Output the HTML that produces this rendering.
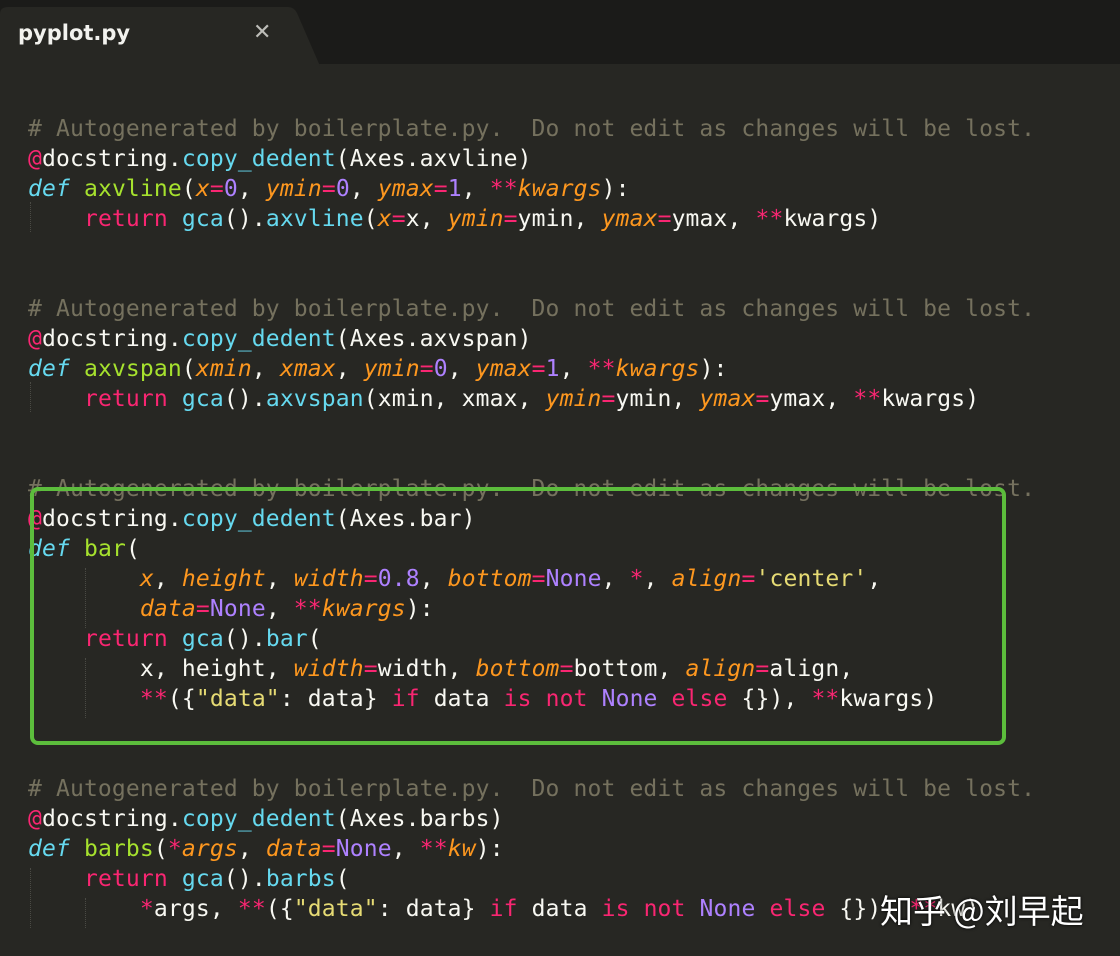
<!DOCTYPE html>
<html><head><meta charset="utf-8">
<style>
html,body{margin:0;padding:0}
body{width:1120px;height:956px;background:#272723;position:relative;overflow:hidden;font-family:"DejaVu Sans Mono","Liberation Mono",monospace}
.top{position:absolute;left:0;top:0;width:1120px;height:64px;background:#1b1b19}
.tab{position:absolute;left:0;top:0}
.tabt{position:absolute;left:18px;top:21px;font-family:"DejaVu Sans","Liberation Sans",sans-serif;font-size:21px;color:#f2f2ee;font-weight:bold}
.x{position:absolute;left:253px;top:20px;font-family:"DejaVu Sans",sans-serif;font-size:22px;color:#bdbdb8;font-weight:bold}
pre{position:absolute;left:28px;top:114px;margin:0;font-size:23px;letter-spacing:0.14px;line-height:30px;color:#f8f8f2;font-family:"DejaVu Sans Mono","Liberation Mono",monospace}
.c{color:#75715e}.p{color:#f92672}.b{color:#66d9ef}.g{color:#a6e22e}.o{color:#fd971f;font-style:italic}.v{color:#ae81ff}.y{color:#e6db74}.i{font-style:italic}
.box{position:absolute;left:30px;top:487px;width:968px;height:250px;border:4px solid #5cbd3c;border-radius:8px}
.wm{position:absolute;left:880px;top:885px;font-family:"Noto Sans CJK SC","WenQuanYi Zen Hei",sans-serif;font-size:33px;color:#fff;text-shadow:0 0 3px #000}
.guide{position:absolute;width:0;border-left:1px dotted #4a4a44}
</style></head><body>
<div class="top"></div>
<svg class="tab" width="330" height="66"><path d="M0 66 L0 14 Q0 7 8 7 L288 7 Q294 7 297 13 L320 66 Z" fill="#272723"/></svg>
<div class="tabt">pyplot.py</div>
<div class="x">✕</div>
<div class="guide" style="left:30px;top:202px;height:30px"></div>
<div class="guide" style="left:30px;top:382px;height:30px"></div>
<div class="guide" style="left:85px;top:568px;height:60px"></div>
<div class="guide" style="left:85px;top:658px;height:60px"></div>
<div class="guide" style="left:30px;top:868px;height:60px"></div>
<div class="guide" style="left:85px;top:898px;height:30px"></div>
<pre><span class="c"># Autogenerated by boilerplate.py.  Do not edit as changes will be lost.</span>
<span class="p">@</span>docstring.<span class="b">copy_dedent</span>(Axes.axvline)
<span class="b i">def</span> <span class="g">axvline</span>(<span class="o">x</span><span class="p">=</span><span class="v">0</span>, <span class="o">ymin</span><span class="p">=</span><span class="v">0</span>, <span class="o">ymax</span><span class="p">=</span><span class="v">1</span>, <span class="p">**</span><span class="o">kwargs</span>):
    <span class="p">return</span> <span class="b">gca</span>().<span class="b">axvline</span>(<span class="o">x</span><span class="p">=</span>x, <span class="o">ymin</span><span class="p">=</span>ymin, <span class="o">ymax</span><span class="p">=</span>ymax, <span class="p">**</span>kwargs)


<span class="c"># Autogenerated by boilerplate.py.  Do not edit as changes will be lost.</span>
<span class="p">@</span>docstring.<span class="b">copy_dedent</span>(Axes.axvspan)
<span class="b i">def</span> <span class="g">axvspan</span>(<span class="o">xmin</span>, <span class="o">xmax</span>, <span class="o">ymin</span><span class="p">=</span><span class="v">0</span>, <span class="o">ymax</span><span class="p">=</span><span class="v">1</span>, <span class="p">**</span><span class="o">kwargs</span>):
    <span class="p">return</span> <span class="b">gca</span>().<span class="b">axvspan</span>(xmin, xmax, <span class="o">ymin</span><span class="p">=</span>ymin, <span class="o">ymax</span><span class="p">=</span>ymax, <span class="p">**</span>kwargs)


<span class="c"># Autogenerated by boilerplate.py.  Do not edit as changes will be lost.</span>
<span class="p">@</span>docstring.<span class="b">copy_dedent</span>(Axes.bar)
<span class="b i">def</span> <span class="g">bar</span>(
        <span class="o">x</span>, <span class="o">height</span>, <span class="o">width</span><span class="p">=</span><span class="v">0.8</span>, <span class="o">bottom</span><span class="p">=</span><span class="v">None</span>, <span class="p">*</span>, <span class="o">align</span><span class="p">=</span><span class="y">'center'</span>,
        <span class="o">data</span><span class="p">=</span><span class="v">None</span>, <span class="p">**</span><span class="o">kwargs</span>):
    <span class="p">return</span> <span class="b">gca</span>().<span class="b">bar</span>(
        x, height, <span class="o">width</span><span class="p">=</span>width, <span class="o">bottom</span><span class="p">=</span>bottom, <span class="o">align</span><span class="p">=</span>align,
        <span class="p">**</span>({<span class="y">"data"</span>: data} <span class="p">if</span> data <span class="p">is</span> <span class="p">not</span> <span class="v">None</span> <span class="p">else</span> {}), <span class="p">**</span>kwargs)


<span class="c"># Autogenerated by boilerplate.py.  Do not edit as changes will be lost.</span>
<span class="p">@</span>docstring.<span class="b">copy_dedent</span>(Axes.barbs)
<span class="b i">def</span> <span class="g">barbs</span>(<span class="p">*</span><span class="o">args</span>, <span class="o">data</span><span class="p">=</span><span class="v">None</span>, <span class="p">**</span><span class="o">kw</span>):
    <span class="p">return</span> <span class="b">gca</span>().<span class="b">barbs</span>(
        <span class="p">*</span>args, <span class="p">**</span>({<span class="y">"data"</span>: data} <span class="p">if</span> data <span class="p">is</span> <span class="p">not</span> <span class="v">None</span> <span class="p">else</span> {}), <span class="p">**</span>kw)</pre>
<div class="box"></div>
<div class="wm">知乎 @刘早起</div>
</body></html>
